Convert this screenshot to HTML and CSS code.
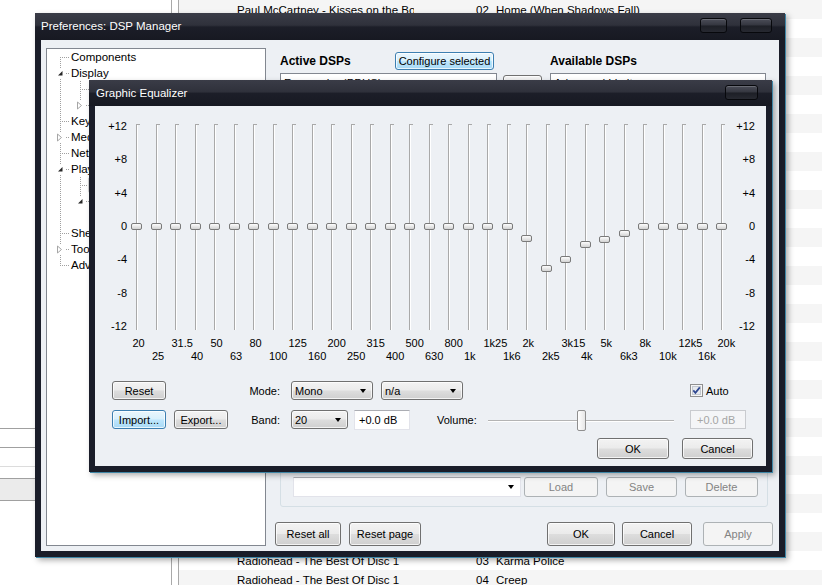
FILE: index.html
```html
<!DOCTYPE html>
<html>
<head>
<meta charset="utf-8">
<title>Preferences: DSP Manager</title>
<link rel="stylesheet" href="styles.css">
</head>
<body>
<div class="desktop">
  <div class="left-panel">
    <div class="lp-line"></div>
    <div class="lp-gap g18"></div>
    <div class="lp-line"></div>
    <div class="lp-gap g18"></div>
    <div class="lp-line faint"></div>
    <div class="lp-gap g11"></div>
    <div class="lp-line"></div>
    <div class="lp-sel"></div>
    <div class="lp-line"></div>
  </div>
  <div class="splitter"></div>
  <div class="playlist">
    <div class="prow"><span class="c1">Paul McCartney - Kisses on the Bottom</span><span class="c2">02</span><span class="c3">Home (When Shadows Fall)</span></div>
    <div class="prow"></div><div class="prow"></div><div class="prow"></div><div class="prow"></div>
    <div class="prow"></div><div class="prow"></div><div class="prow"></div><div class="prow"></div>
    <div class="prow"></div><div class="prow"></div><div class="prow"></div><div class="prow"></div>
    <div class="prow"></div><div class="prow"></div><div class="prow"></div><div class="prow"></div>
    <div class="prow"></div><div class="prow"></div><div class="prow"></div><div class="prow"></div>
    <div class="prow"></div><div class="prow"></div><div class="prow"></div><div class="prow"></div>
    <div class="prow"></div><div class="prow"></div><div class="prow"></div><div class="prow"></div>
    <div class="prow"><span class="c1">Radiohead - The Best Of Disc 1</span><span class="c2">03</span><span class="c3">Karma Police</span></div>
    <div class="prow"><span class="c1">Radiohead - The Best Of Disc 1</span><span class="c2">04</span><span class="c3">Creep</span></div>
  </div>

  <!-- Preferences window -->
  <div class="win dsp">
    <div class="titlebar dsp-tb">
      <span class="wtitle">Preferences: DSP Manager</span>
      <span class="tbtns"><span class="tbtn w27"></span><span class="tbtn w32"></span></span>
    </div>
    <div class="client dsp-client">
      <div class="tree">
        <div class="ti l0"><span class="ex"></span><span class="tx">Components</span></div>
        <div class="ti l0"><span class="ex"><svg class="tri" width="9" height="9" viewBox="0 0 9 9"><rect width="9" height="9" fill="#fff"/><polygon points="6.5,2 6.5,6.5 2,6.5" fill="#262626"/></svg></span><span class="tx">Display</span></div>
        <div class="ti l1"><span class="ex"></span><span class="tx">Default User Interface</span></div>
        <div class="ti l1"><span class="ex"><svg class="tri" width="9" height="9" viewBox="0 0 9 9"><rect width="9" height="9" fill="#fff"/><polygon points="1.5,1 5.5,4.5 1.5,8" fill="#fff" stroke="#a6a6a6" stroke-width="1"/></svg></span><span class="tx">Columns UI</span></div>
        <div class="ti l0"><span class="ex"></span><span class="tx">Keyboard Shortcuts</span></div>
        <div class="ti l0"><span class="ex"><svg class="tri" width="9" height="9" viewBox="0 0 9 9"><rect width="9" height="9" fill="#fff"/><polygon points="1.5,1 5.5,4.5 1.5,8" fill="#fff" stroke="#a6a6a6" stroke-width="1"/></svg></span><span class="tx">Media Library</span></div>
        <div class="ti l0"><span class="ex"></span><span class="tx">Networking</span></div>
        <div class="ti l0"><span class="ex"><svg class="tri" width="9" height="9" viewBox="0 0 9 9"><rect width="9" height="9" fill="#fff"/><polygon points="6.5,2 6.5,6.5 2,6.5" fill="#262626"/></svg></span><span class="tx">Playback</span></div>
        <div class="ti l1"><span class="ex"></span><span class="tx sel">DSP Manager</span></div>
        <div class="ti l1"><span class="ex"><svg class="tri" width="9" height="9" viewBox="0 0 9 9"><rect width="9" height="9" fill="#fff"/><polygon points="6.5,2 6.5,6.5 2,6.5" fill="#262626"/></svg></span><span class="tx">Output</span></div>
        <div class="ti l2"><span class="ex"></span><span class="tx">ASIO</span></div>
        <div class="ti l0"><span class="ex"></span><span class="tx">Shell Integration</span></div>
        <div class="ti l0"><span class="ex"><svg class="tri" width="9" height="9" viewBox="0 0 9 9"><rect width="9" height="9" fill="#fff"/><polygon points="1.5,1 5.5,4.5 1.5,8" fill="#fff" stroke="#a6a6a6" stroke-width="1"/></svg></span><span class="tx">Tools</span></div>
        <div class="ti l0"><span class="ex"></span><span class="tx">Advanced</span></div>
      </div>
      <div class="pane">
        <div class="hdr">
          <div class="hdr-a"><b class="h">Active DSPs</b><span class="btn hot cfg">Configure selected</span></div>
          <div></div>
          <div class="hdr-c"><b class="h">Available DSPs</b></div>
        </div>
        <div class="lists">
          <div class="lbox"><div class="li">Resampler (PPHS)</div></div>
          <div class="mid"><span class="btn mbtn">&lt;=</span></div>
          <div class="lbox"><div class="li">Advanced Limiter</div></div>
        </div>
        <div class="group">
          <div class="grow">
            <span class="ecombo"><span></span><i class="arr"></i></span>
            <span class="btn dis wl">Load</span>
            <span class="btn dis ws">Save</span>
            <span class="btn dis wd">Delete</span>
          </div>
        </div>
        <div class="bottom">
          <span class="btn wra">Reset all</span>
          <span class="btn wrp">Reset page</span>
          <span class="spacer"></span>
          <span class="btn wok">OK</span>
          <span class="btn wca">Cancel</span>
          <span class="btn dis wap">Apply</span>
        </div>
      </div>
    </div>
  </div>

  <!-- Graphic Equalizer window -->
  <div class="win eq">
    <div class="titlebar eq-tb">
      <span class="wtitle">Graphic Equalizer</span>
      <span class="tbtns"><span class="tbtn w33"></span></span>
    </div>
    <div class="client eq-client">
      <div class="scale">
        <div class="ylabels yl-left"><span>+12</span><span>+8</span><span>+4</span><span>0</span><span>-4</span><span>-8</span><span>-12</span></div>
        <div class="bands">
          <div class="band"><div class="track"></div><span class="thumb" style="top:113px"></span><span class="flabel">20</span></div>
          <div class="band odd"><div class="track"></div><span class="thumb" style="top:113px"></span><span class="flabel">25</span></div>
          <div class="band"><div class="track"></div><span class="thumb" style="top:113px"></span><span class="flabel">31.5</span></div>
          <div class="band odd"><div class="track"></div><span class="thumb" style="top:113px"></span><span class="flabel">40</span></div>
          <div class="band"><div class="track"></div><span class="thumb" style="top:113px"></span><span class="flabel">50</span></div>
          <div class="band odd"><div class="track"></div><span class="thumb" style="top:113px"></span><span class="flabel">63</span></div>
          <div class="band"><div class="track"></div><span class="thumb" style="top:113px"></span><span class="flabel">80</span></div>
          <div class="band odd"><div class="track"></div><span class="thumb" style="top:113px"></span><span class="flabel">100</span></div>
          <div class="band"><div class="track"></div><span class="thumb" style="top:113px"></span><span class="flabel">125</span></div>
          <div class="band odd"><div class="track"></div><span class="thumb" style="top:113px"></span><span class="flabel">160</span></div>
          <div class="band"><div class="track"></div><span class="thumb" style="top:113px"></span><span class="flabel">200</span></div>
          <div class="band odd"><div class="track"></div><span class="thumb" style="top:113px"></span><span class="flabel">250</span></div>
          <div class="band"><div class="track"></div><span class="thumb" style="top:113px"></span><span class="flabel">315</span></div>
          <div class="band odd"><div class="track"></div><span class="thumb" style="top:113px"></span><span class="flabel">400</span></div>
          <div class="band"><div class="track"></div><span class="thumb" style="top:113px"></span><span class="flabel">500</span></div>
          <div class="band odd"><div class="track"></div><span class="thumb" style="top:113px"></span><span class="flabel">630</span></div>
          <div class="band"><div class="track"></div><span class="thumb" style="top:113px"></span><span class="flabel">800</span></div>
          <div class="band odd"><div class="track"></div><span class="thumb" style="top:113px"></span><span class="flabel">1k</span></div>
          <div class="band"><div class="track"></div><span class="thumb" style="top:113px"></span><span class="flabel">1k25</span></div>
          <div class="band odd"><div class="track"></div><span class="thumb" style="top:113px"></span><span class="flabel">1k6</span></div>
          <div class="band"><div class="track"></div><span class="thumb" style="top:124.5px"></span><span class="flabel">2k</span></div>
          <div class="band odd"><div class="track"></div><span class="thumb" style="top:155px"></span><span class="flabel">2k5</span></div>
          <div class="band"><div class="track"></div><span class="thumb" style="top:146px"></span><span class="flabel">3k15</span></div>
          <div class="band odd"><div class="track"></div><span class="thumb" style="top:131px"></span><span class="flabel">4k</span></div>
          <div class="band"><div class="track"></div><span class="thumb" style="top:126px"></span><span class="flabel">5k</span></div>
          <div class="band odd"><div class="track"></div><span class="thumb" style="top:120px"></span><span class="flabel">6k3</span></div>
          <div class="band"><div class="track"></div><span class="thumb" style="top:113px"></span><span class="flabel">8k</span></div>
          <div class="band odd"><div class="track"></div><span class="thumb" style="top:113px"></span><span class="flabel">10k</span></div>
          <div class="band"><div class="track"></div><span class="thumb" style="top:113px"></span><span class="flabel">12k5</span></div>
          <div class="band odd"><div class="track"></div><span class="thumb" style="top:113px"></span><span class="flabel">16k</span></div>
          <div class="band"><div class="track"></div><span class="thumb" style="top:113px"></span><span class="flabel">20k</span></div>
        </div>
        <div class="ylabels yl-right"><span>+12</span><span>+8</span><span>+4</span><span>0</span><span>-4</span><span>-8</span><span>-12</span></div>
      </div>

      <div class="crow r1">
        <span class="btn wbtn first">Reset</span>
        <span class="lbl lmode">Mode:</span>
        <span class="btn combo wc82 ml6"><span>Mono</span><i class="arr"></i></span>
        <span class="btn combo wc82 ml8"><span>n/a</span><i class="arr"></i></span>
        <span class="chk"><svg width="13" height="13" viewBox="0 0 13 13"><rect x="0.5" y="0.5" width="12" height="12" fill="#f6f6f6" stroke="#8f8f8f"/><rect x="2.5" y="2.5" width="8" height="8" fill="#e6e9ee" stroke="#c3c8cf"/><path d="M3.3 6.4 L5.4 8.9 L9.8 3.4" fill="none" stroke="#2e4790" stroke-width="1.7"/></svg><span class="chk-t">Auto</span></span>
      </div>

      <div class="crow r2">
        <span class="btn hot wbtn first">Import...</span>
        <span class="btn wbtn ml8">Export...</span>
        <span class="lbl lband">Band:</span>
        <span class="btn combo wc57 ml6"><span>20</span><i class="arr"></i></span>
        <span class="field ml6">+0.0 dB</span>
        <span class="lbl lvol">Volume:</span>
        <span class="slider"><span class="sl-line"></span><span class="sl-thumb"></span></span>
        <span class="field dfield">+0.0 dB</span>
      </div>

      <div class="crow r3">
        <span class="btn wok2">OK</span>
        <span class="btn wca2">Cancel</span>
      </div>
    </div>
  </div>
</div>
</body>
</html>
```

FILE: styles.css
```css
* { box-sizing: border-box; }
html, body { margin: 0; padding: 0; }
body {
  width: 822px; height: 585px; overflow: hidden;
  font-family: "Liberation Sans", Arial, sans-serif;
  font-size: 11px; color: #000; background: #fff;
}
.desktop { position: relative; width: 822px; height: 585px; overflow: hidden; display: flex; }

/* background: left panel */
.left-panel { width: 172px; flex: none; border-right: 1px solid #a9a9a9; display: flex; flex-direction: column; padding-top: 428px; }
.lp-line { height: 1px; background: #a0a0a0; }
.lp-line.faint { background: #dcdcdc; }
.lp-gap.g18 { height: 18px; }
.lp-gap.g11 { height: 11px; }
.lp-sel { height: 21px; background: #ebebeb; }
.splitter { width: 6px; flex: none; }

/* background: playlist */
.playlist { flex: 1; border-left: 1px solid #a9a9a9; display: flex; flex-direction: column; }
.prow { height: 19px; flex: none; display: flex; align-items: center; padding-left: 58px; font-size: 11.5px; white-space: nowrap; }
.prow:nth-child(odd) { background: #f5f5f5; }
.c1 { width: 177px; overflow: hidden; }
.c2 { width: 20px; margin-left: 62px; }

/* windows */
.win {
  position: absolute; background: #1a1d29; padding: 0 6px 6px;
  display: flex; flex-direction: column;
  box-shadow: 1px 1px 0 #3f86a6, 3px 3px 6px rgba(0,0,0,0.35);
}
.dsp { left: 35px; top: 13px; width: 750px; height: 544px; }
.eq { left: 89px; top: 80px; width: 683px; height: 392px; }
.titlebar {
  display: flex; align-items: flex-start; justify-content: space-between;
  margin: 0 -6px; padding: 0 6px;
  background: linear-gradient(to bottom, #3a3c47 0%, #2f313b 45%, #1c1e28 52%, #171922 100%);
}
.dsp-tb { height: 27px; padding-right: 13px; }
.eq-tb { height: 26px; padding-left: 7px; padding-right: 14px; }
.wtitle { color: #fff; font-size: 11.5px; line-height: 27px; }
.eq-tb .wtitle { line-height: 27px; }
.tbtns { display: flex; gap: 13px; margin-top: 5px; }
.tbtn {
  height: 15px; border: 1px solid #07080c; border-radius: 3px;
  background: linear-gradient(to bottom, #4b4d58 0%, #34363f 48%, #1d1f26 52%, #272931 100%);
  box-shadow: inset 0 1px 0 rgba(255,255,255,0.18);
}
.tbtn.w27 { width: 27px; }
.tbtn.w32 { width: 32px; }
.tbtn.w33 { width: 33px; }
.client { flex: 1; background: #edf0f4; }

/* DSP client */
.dsp-client { display: flex; padding: 8px 9px 5px 5px; }
.tree {
  width: 220px; flex: none; background-color: #fff; border: 1px solid #828790;
  overflow: hidden; display: flex; flex-direction: column;
  background-image:
    repeating-linear-gradient(to bottom, #a0a0a0 0 1px, transparent 1px 2px),
    repeating-linear-gradient(to bottom, #a0a0a0 0 1px, transparent 1px 2px),
    repeating-linear-gradient(to bottom, #a0a0a0 0 1px, transparent 1px 2px);
  background-repeat: no-repeat;
  background-size: 1px 208px, 1px 24px, 1px 24px;
  background-position: 13px 8px, 33px 32px, 33px 128px;
}
.ti { height: 16px; flex: none; display: flex; align-items: center; white-space: nowrap; }
.ti.l0 { padding-left: 9px; }
.ti.l1 { padding-left: 29px; }
.ti.l2 { padding-left: 49px; }
.ex {
  width: 15px; height: 16px; flex: none; display: flex; align-items: center;
  background-image: repeating-linear-gradient(to right, #a0a0a0 0 1px, transparent 1px 2px);
  background-repeat: no-repeat; background-size: 9px 1px; background-position: 4px 8px;
}
.tri { display: block; }
.tx { font-size: 11.5px; line-height: 14px; }
.tx.sel { background: #e6e6e6; border: 1px solid #d6d6d6; border-radius: 2px; padding: 0 2px; margin-left: -3px; }

.pane { flex: 1; margin-left: 9px; margin-top: 4px; display: flex; flex-direction: column; }
.hdr { display: grid; grid-template-columns: 217px 53px 216px; margin: 0 5px; height: 18px; align-items: center; }
.hdr-a { display: flex; align-items: center; justify-content: space-between; padding-right: 3px; }
.h { font-size: 12px; font-weight: bold; }
.cfg { width: 99px; height: 18px; }
.lists { flex: 1; margin: 3px 5px 0; display: flex; }
.lbox { background: #fff; border: 1px solid #828790; }
.lists .lbox:first-child { width: 217px; }
.lists .lbox:last-child { width: 216px; margin-left: 8px; margin-top: 0; }
.li { padding: 2px 3px; font-size: 11.5px; line-height: 14px; }
.mid { width: 39px; margin-left: 6px; padding-top: 2px; }
.mbtn { width: 39px; height: 23px; }
.group { height: 120px; margin: 7px 5px 0; border: 1px solid #d5dfe5; border-radius: 3px; display: flex; flex-direction: column; justify-content: flex-end; padding: 0 9px 9px 12px; }
.grow { display: flex; height: 20px; }
.ecombo {
  width: 228px; height: 20px; background: #fff;
  border: 1px solid #e2e3ea; border-top-color: #abadb3;
  display: flex; align-items: center; justify-content: space-between; padding: 0 6px 0 3px;
}
.wl { width: 74px; margin-left: 3px; }
.ws { width: 71px; margin-left: 8px; }
.wd { width: 73px; margin-left: 8px; }
.bottom { display: flex; height: 24px; margin-top: 15px; }
.bottom .btn { height: 24px; }
.wra { width: 66px; }
.wrp { width: 72px; margin-left: 8px; }
.spacer { flex: 1; }
.wok { width: 68px; }
.wca { width: 70px; margin-left: 7px; }
.wap { width: 70px; margin-left: 11px; }

/* generic controls */
.btn {
  display: flex; align-items: center; justify-content: center; flex: none;
  border: 1px solid #707070; border-radius: 3px;
  background: linear-gradient(to bottom, #f3f3f3 0%, #ebebeb 48%, #dddddd 52%, #cfcfcf 100%);
  box-shadow: inset 0 0 0 1px rgba(255,255,255,0.75);
  font-size: 11px; color: #000; white-space: nowrap;
}
.btn.hot {
  border-color: #3c7fb1;
  background: linear-gradient(to bottom, #eaf6fd 0%, #d9f0fc 48%, #bee6fd 52%, #a7d9f5 100%);
}
.btn.dis { border-color: #adb2b5; background: #f4f4f4; color: #838383; box-shadow: none; }
.combo { justify-content: space-between; padding: 0 6px 0 3px; }
.arr { display: block; width: 0; height: 0; border-left: 3.5px solid transparent; border-right: 3.5px solid transparent; border-top: 4px solid #000; }

/* EQ client */
.eq-client { display: flex; flex-direction: column; padding-top: 4px; }
.scale { display: flex; height: 258px; flex: none; }
.ylabels { display: flex; flex-direction: column; flex: none; }
.ylabels span { height: 33.333px; line-height: 33.333px; text-align: right; }
.yl-left { width: 32px; }
.yl-right { width: 23.5px; }
.bands { display: flex; }
.band { position: relative; width: 19.5px; flex: none; padding-top: 14px; }
.track { position: relative; margin-left: 9px; width: 1px; height: 206px; background: #a9a9a9; box-shadow: 1px 0 0 #fff; }
.track::before { content: ""; position: absolute; left: 0; top: 0; width: 4px; height: 1px; background: #a9a9a9; }
.thumb {
  position: absolute; left: 4px; width: 11px; height: 7px;
  border: 1px solid #7a7a7a; border-radius: 2px;
  background: linear-gradient(to bottom, #fdfdfd, #d3d3d3);
}
.flabel { display: block; padding-left: 5.5px; line-height: 13px; margin-top: 7px; white-space: nowrap; }
.band.odd .flabel { margin-top: 20px; }

.crow { display: flex; align-items: center; flex: none; }
.r1 { margin-top: 13px; height: 19px; }
.r2 { margin-top: 10px; height: 19px; }
.r3 { margin-top: 9px; height: 21px; justify-content: flex-end; padding-right: 13px; }
.crow .btn { height: 19px; }
.r3 .btn { height: 21px; }
.wbtn { width: 54px; }
.first { margin-left: 17px; }
.ml6 { margin-left: 6px; }
.ml8 { margin-left: 8px; }
.lbl { flex: none; }
.lmode { width: 119px; text-align: right; padding-right: 5px; }
.lband { width: 57px; text-align: right; padding-right: 5px; }
.lvol { width: 51px; margin-left: 27px; }
.wc82 { width: 82px; }
.wc57 { width: 57px; }
.chk { display: flex; align-items: center; margin-left: 227px; }
.chk svg { display: block; }
.chk-t { margin-left: 3px; }
.field {
  width: 56px; height: 20px; flex: none; background: #fff;
  border: 1px solid #e2e3ea; border-top-color: #abadb3;
  display: flex; align-items: center; padding-left: 4px;
}
.dfield { margin-left: 16px; background: #f4f5f7; border: 1px solid #c9cbcf; color: #a5a5a5; padding-left: 6px; height: 19px; }
.slider { position: relative; width: 186px; height: 21px; flex: none; align-self: flex-start; }
.sl-line { position: absolute; left: 0; right: 0; top: 10px; height: 1px; background: #b4b4b4; box-shadow: 0 1px 0 #fff; }
.sl-thumb {
  position: absolute; left: 89px; top: 0; width: 9px; height: 21px;
  border: 1px solid #8f8f8f; border-radius: 2px;
  background: linear-gradient(to right, #ffffff, #e6e6e6);
}
.wok2 { width: 72px; }
.wca2 { width: 71px; margin-left: 13px; }
```
